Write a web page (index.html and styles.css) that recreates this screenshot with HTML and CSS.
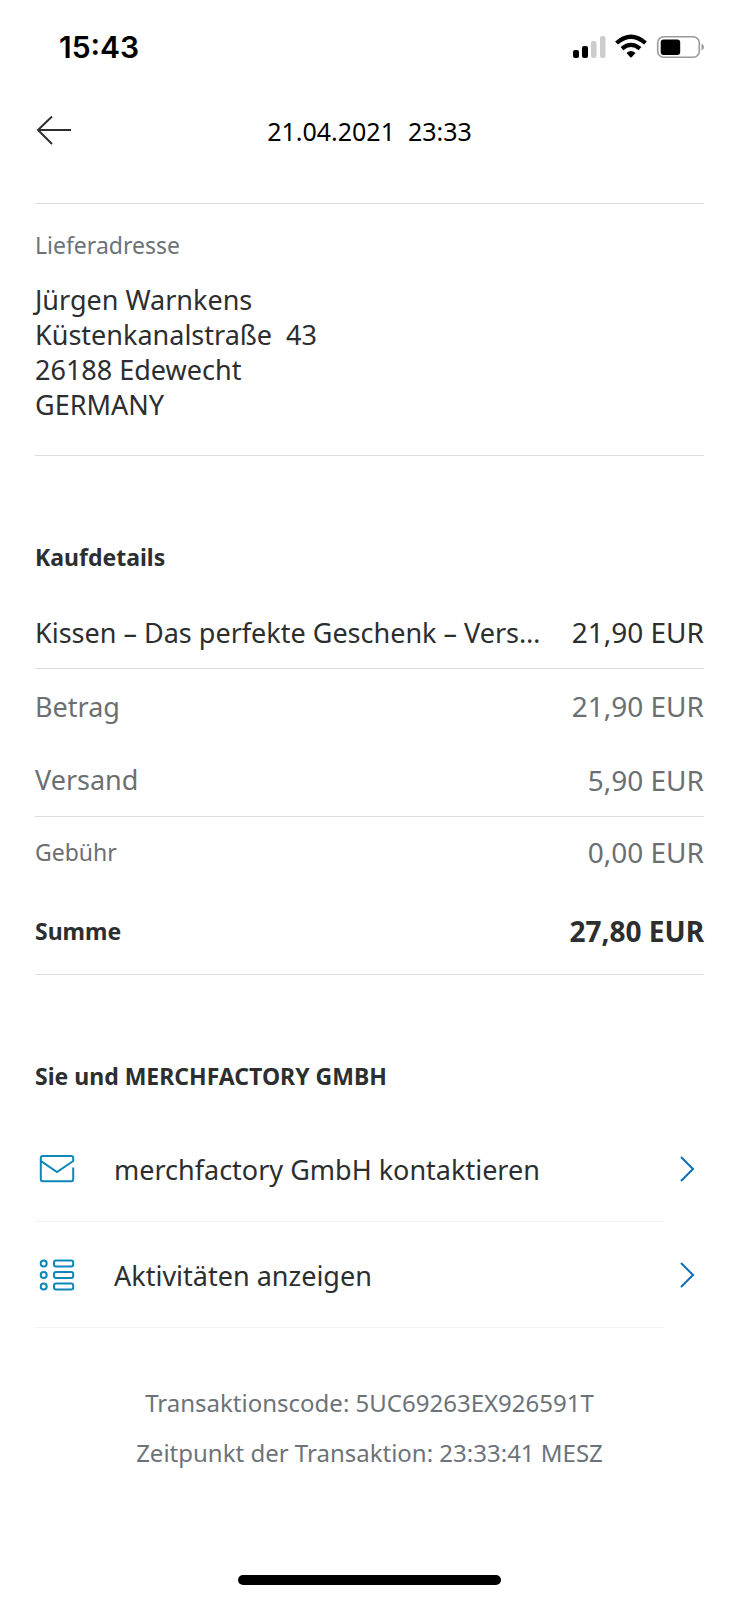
FILE: index.html
```html
<!DOCTYPE html>
<html lang="de">
<head>
<meta charset="utf-8">
<meta name="viewport" content="width=device-width, initial-scale=1">
<title>Transaktionsdetails</title>
<link rel="stylesheet" href="styles.css">
</head>
<body>
<div class="screen">
  <div class="status">
    <span class="clock">15:43</span>
    <svg class="status-icons" width="132" height="26" viewBox="0 0 132 26" aria-hidden="true">
      <rect x="1" y="16" width="6" height="8" rx="2"/>
      <rect x="10" y="12" width="6" height="12" rx="2"/>
      <rect x="19" y="7" width="5.500" height="17" rx="2" fill="#ccc"/>
      <rect x="28" y="2" width="5.500" height="22" rx="2" fill="#ccc"/>
      <g fill="none" stroke="#000" stroke-width="4.200">
        <path d="M44.500 9Q59-3.600 73.500 9"/>
        <path d="M50 14.700Q59 7 68 14.700"/>
      </g>
      <path d="M54.500 19Q59 15.200 63.500 19L59.900 23Q59 24 58.100 23Z"/>
      <rect x="85.700" y="2.700" width="41.600" height="20.600" rx="6" fill="none" stroke="#999" stroke-width="1.600"/>
      <rect x="88.700" y="5.500" width="19.500" height="15.500" rx="3"/>
      <path d="M129.500 9.500q2.500 1 2.500 3.500t-2.500 3.500z" fill="#999"/>
    </svg>
  </div>

  <header class="topbar">
    <button class="back" type="button" aria-label="Zurück">
      <svg width="36" height="30" viewBox="0 0 36 30" aria-hidden="true">
        <path d="M36 14H3M17 0.500L3 14L17 28"/>
      </svg>
    </button>
    <h1 class="date">21.04.2021  23:33</h1>
  </header>

  <main class="content">
    <section class="address-block">
      <h2 class="label">Lieferadresse</h2>
      <address class="address">Jürgen Warnkens
Küstenkanalstraße  43
26188 Edewecht
GERMANY</address>
    </section>

    <section class="section">
      <h2 class="heading">Kaufdetails</h2>
      <table class="details">
        <tbody>
          <tr class="row ruled item"><th scope="row">Kissen – Das perfekte Geschenk – Vers…</th><td>21,90 EUR</td></tr>
          <tr class="row tall"><th scope="row">Betrag</th><td>21,90 EUR</td></tr>
          <tr class="row tall ruled"><th scope="row">Versand</th><td>5,90 EUR</td></tr>
          <tr class="row fee"><th scope="row">Gebühr</th><td>0,00 EUR</td></tr>
          <tr class="row ruled total"><th scope="row">Summe</th><td>27,80 EUR</td></tr>
        </tbody>
      </table>
    </section>

    <section class="section">
      <h2 class="heading">Sie und MERCHFACTORY GMBH</h2>
      <ul class="actions">
        <li>
          <a class="action" href="#kontakt">
            <span class="action-main">
              <svg class="action-icon" width="36" height="32" viewBox="0 0 36 32" aria-hidden="true">
                <path d="M1.800 8V5Q1.800 3 3.800 3H32.200Q34.200 3 34.200 5V8L18 19L1.800 8V26.200Q1.800 28.200 3.800 28.200H32.200Q34.200 28.200 34.200 26.200V14.500"/>
              </svg>
              <span class="action-label">merchfactory GmbH kontaktieren</span>
            </span>
            <svg class="chevron" width="16" height="28" viewBox="0 0 16 28" aria-hidden="true"><path d="M2 2L14 14L2 26"/></svg>
          </a>
        </li>
        <li>
          <a class="action" href="#aktivitaeten">
            <span class="action-main">
              <svg class="action-icon" width="36" height="32" viewBox="0 0 36 32" aria-hidden="true">
                <circle cx="4.700" cy="4.500" r="3"/><circle cx="4.700" cy="16" r="3"/><circle cx="4.700" cy="27.500" r="3"/>
                <rect x="15" y="1.400" width="19.200" height="6.200" rx="2"/><rect x="15" y="12.900" width="19.200" height="6.200" rx="2"/><rect x="15" y="24.400" width="19.200" height="6.200" rx="2"/>
              </svg>
              <span class="action-label">Aktivitäten anzeigen</span>
            </span>
            <svg class="chevron" width="16" height="28" viewBox="0 0 16 28" aria-hidden="true"><path d="M2 2L14 14L2 26"/></svg>
          </a>
        </li>
      </ul>
    </section>
  </main>

  <footer class="meta">
    <p>Transaktionscode: 5UC69263EX926591T</p>
    <p>Zeitpunkt der Transaktion: 23:33:41 MESZ</p>
  </footer>
  <div class="home-bar"></div>
</div>
</body>
</html>
```
FILE: styles.css
```css
* {
  box-sizing: border-box;
}

body {
  margin: 0;
  background: #fff;
  color: #2c2e2f;
  font-family: "Noto Sans", "Open Sans", sans-serif;
  font-size: 27px;
}

h1, h2, p, ul {
  margin: 0;
  padding: 0;
}

.screen {
  display: flex;
  flex-direction: column;
  min-height: 100vh;
}

.status {
  display: flex;
  align-items: center;
  justify-content: space-between;
  height: 94px;
  padding: 0 35px 0 59px;
}

.clock {
  color: #000;
  font-family: Inter, sans-serif;
  font-size: 30px;
  font-weight: 600;
}

.topbar {
  display: grid;
  grid-template-columns: 36px 1fr 36px;
  align-items: center;
  height: 74px;
  margin-bottom: 35px;
  padding: 0 35px;
}

.back {
  display: flex;
  padding: 0;
  border: 0;
  background: none;
}

.back path {
  fill: none;
  stroke: #2c2e2f;
  stroke-width: 2;
}

.date {
  color: #000;
  font-size: 25px;
  font-weight: 400;
  text-align: center;
  white-space: pre;
}

.content {
  padding: 0 35px;
}

.address-block {
  padding: 25px 0 33px;
  border: solid #dcdddd;
  border-width: 1px 0;
}

.label {
  margin-bottom: 21px;
  color: #6c7378;
  font-size: 23px;
  font-weight: 400;
  line-height: 32px;
}

.address {
  font-style: normal;
  line-height: 35px;
  white-space: pre-wrap;
}

.section {
  padding-top: 85px;
}

.heading {
  font-size: 23px;
  font-weight: 700;
  line-height: 32px;
}

.details {
  width: 100%;
  margin-top: 23px;
  border-collapse: separate;
  border-spacing: 0;
}

.row {
  height: 73px;
  color: #6c6f71;
}

.row th,
.row td {
  padding: 0;
  font-weight: 400;
  white-space: nowrap;
}

.row th {
  text-align: left;
}

.row td {
  font-size: 28px;
  text-align: right;
}

.ruled th,
.ruled td {
  border-bottom: 1px solid #dcdddd;
}

.item,
.total {
  color: #2c2e2f;
}

.tall {
  height: 74px;
}

.fee {
  height: 70px;
}

.total {
  height: 88px;
}

.fee th,
.total th {
  font-size: 23px;
}

.total th,
.total td {
  font-weight: 700;
}

.actions {
  margin-top: 24px;
  list-style: none;
}

.action {
  display: flex;
  align-items: center;
  gap: 15px;
  padding-right: 9px;
  color: inherit;
  text-decoration: none;
}

.action-main {
  display: flex;
  flex: 1;
  align-items: center;
  gap: 39px;
  height: 106px;
  padding-left: 4px;
  border-bottom: 1px solid #f1f2f2;
}

.action-label {
  padding-top: 2px;
}

.action-icon {
  flex: none;
  fill: none;
  stroke: #0e86b8;
  stroke-width: 2;
}

.chevron {
  fill: none;
  stroke: #0f6db8;
  stroke-width: 2;
}

.meta {
  margin-top: 50px;
  color: #6c7378;
  font-size: 24px;
  line-height: 50px;
  text-align: center;
}

.home-bar {
  width: 263px;
  height: 10px;
  margin: auto auto 15px;
  border-radius: 5px;
  background: #000;
}
```
